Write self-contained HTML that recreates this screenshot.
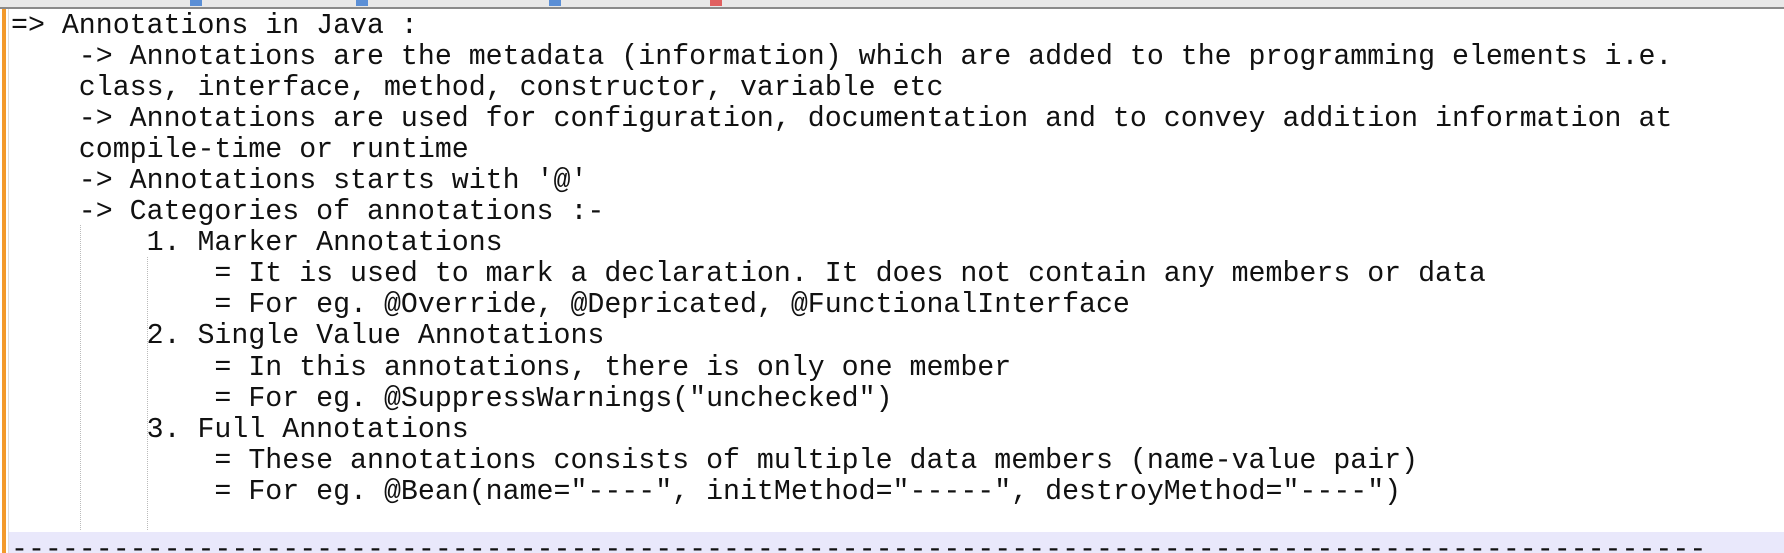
<!DOCTYPE html>
<html><head><meta charset="utf-8"><style>
html,body{margin:0;padding:0;background:#fff;width:1784px;height:553px;overflow:hidden;position:relative}
.top{position:absolute;left:0;top:0;width:1784px;height:7px;background:#e8e8e8;border-bottom:2px solid #8a8a8a}
.tab{position:absolute;top:0;height:6px;width:12px;background:#5b8fd6}
.orange{position:absolute;left:2px;top:9px;width:4px;height:544px;background:#f39a2c}
.marg{position:absolute;left:8px;top:9px;width:1px;height:544px;background:#ddd}
.band{position:absolute;left:9px;top:532px;width:1775px;height:21px;background:#e9e8fb}
.guide{position:absolute;width:0;border-left:1px dotted #bbb}
pre{position:absolute;left:11px;margin:0;font-family:"Liberation Mono",monospace;font-size:28.25px;line-height:31.1px;color:#111;white-space:pre}
</style></head><body>
<div class="top"></div>
<div class="tab" style="left:190px"></div>
<div class="tab" style="left:356px"></div>
<div class="tab" style="left:549px"></div>
<div class="tab" style="left:710px;background:#e06060"></div>
<div class="band"></div>
<div class="orange"></div><div class="marg"></div>
<div class="guide" style="left:80px;top:225px;height:305px"></div>
<div class="guide" style="left:147px;top:257px;height:273px"></div>
<pre style="top:10.5px">=&gt; Annotations in Java :
    -&gt; Annotations are the metadata (information) which are added to the programming elements i.e.
    class, interface, method, constructor, variable etc
    -&gt; Annotations are used for configuration, documentation and to convey addition information at
    compile-time or runtime
    -&gt; Annotations starts with '@'
    -&gt; Categories of annotations :-
        1. Marker Annotations
            = It is used to mark a declaration. It does not contain any members or data
            = For eg. @Override, @Depricated, @FunctionalInterface
        2. Single Value Annotations
            = In this annotations, there is only one member
            = For eg. @SuppressWarnings("unchecked")
        3. Full Annotations
            = These annotations consists of multiple data members (name-value pair)
            = For eg. @Bean(name="----", initMethod="-----", destroyMethod="----")</pre>
<pre style="top:535px">----------------------------------------------------------------------------------------------------</pre>
</body></html>
